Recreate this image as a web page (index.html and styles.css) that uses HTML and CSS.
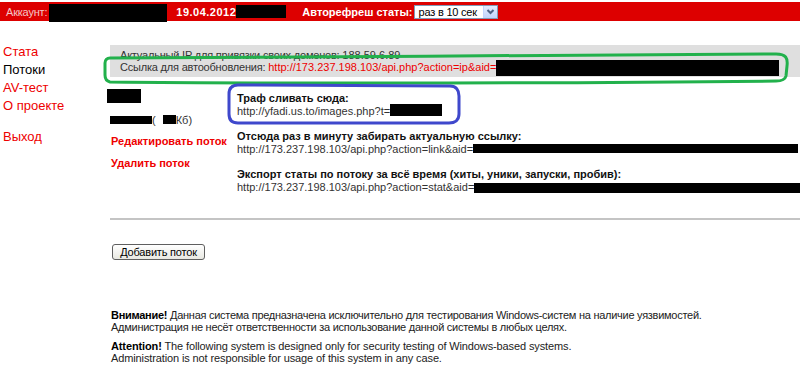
FILE: index.html
```html
<!DOCTYPE html>
<html>
<head>
    <meta charset="utf-8">
    <link rel="stylesheet" href="styles.css">
</head>
<body>

<!-- Top bar -->
<div class="topbar">
    <span class="acc-label">Аккаунт:</span>
    <span class="redact acc-id"></span>
    <b class="date">19.04.2012</b>
    <span class="redact date-tail"></span>
    <b class="refresh-label">Авторефреш статы:</b>
    <div class="fake-select">
        <span class="fake-select-text">раз в 10 сек</span>
        <span class="fake-select-arrow">
            <svg width="11" height="10" viewBox="0 0 11 10"><polyline points="2.5,3 5.5,6 8.5,3" fill="none" stroke="#4d6185" stroke-width="2"/></svg>
        </span>
    </div>
</div>

<div class="layout">
    <!-- Menu -->
    <ul class="nav">
        <li><a href="#">Стата</a></li>
        <li class="current">Потоки</li>
        <li><a href="#">AV-тест</a></li>
        <li><a href="#">О проекте</a></li>
        <li class="logout"><a href="#">Выход</a></li>
    </ul>

    <div class="content">
        <div class="infobox">
            <div class="info-line">Актуальный IP для привязки своих доменов: <span class="num">188.59.6.89</span></div>
            <div class="info-line">Ссылка для автообновления: <a href="#">http://173.237.198.103/api.php?action=ip&amp;aid=</a><span class="redact aid-ip"></span></div>
        </div>

        <!-- Stream -->
        <div class="stream">
            <div class="stream-side">
                <span class="redact thumb"></span>
                <div class="size"><span class="redact name"></span>(<span class="redact kb"></span>Кб)</div>
                <a href="#" class="action">Редактировать поток</a>
                <a href="#" class="action action-delete">Удалить поток</a>
            </div>
            <div class="stream-info">
                <div class="field">
                    <b>Траф сливать сюда:</b>
                    <div class="url">http://yfadi.us.to/images.php?t=<span class="redact url-t"></span></div>
                </div>
                <div class="field">
                    <b>Отсюда раз в минуту забирать актуальную ссылку:</b>
                    <div class="url">http://173.237.198.103/api.php?action=link&amp;aid=<span class="redact url-link"></span></div>
                </div>
                <div class="field">
                    <b>Экспорт статы по потоку за всё время (хиты, уники, запуски, пробив):</b>
                    <div class="url">http://173.237.198.103/api.php?action=stat&amp;aid=<span class="redact url-stat"></span></div>
                </div>
            </div>
        </div>

        <hr class="sep">

        <button class="add-btn">Добавить поток</button>

        <div class="warning">
            <p class="ru"><b>Внимание!</b> Данная система предназначена исключительно для тестирования Windows-систем на наличие уязвимостей.<br>
            Администрация не несёт ответственности за использование данной системы в любых целях.</p>
            <p class="en"><b>Attention!</b> The following system is designed only for security testing of Windows-based systems.<br>
            Administration is not responsible for usage of this system in any case.</p>
        </div>
    </div>
</div>

<!-- hand drawn marks over the screenshot -->
<svg class="marks" width="800" height="379" viewBox="0 0 800 379">
    <path d="M110,58 C300,57 600,55 776,54 C786,54 788,58 787,66 L786,76 C785,80 782,81 776,81 C600,83 300,84 110,82 C106,81 105,79 105,75 L105,63 C105,60 107,58 110,58 Z" fill="none" stroke="#22b14c" stroke-width="3"/>
    <path d="M238,85 L450,86 C456,86 459,90 459,96 L459,114 C459,120 455,123 449,123 L238,123 C232,123 229,120 229,114 L229,94 C229,88 232,85 238,85 Z" fill="none" stroke="#3f48cc" stroke-width="3"/>
</svg>

</body>
</html>
```

FILE: styles.css
```css
body {
    margin: 0;
    font-family: Tahoma, "Liberation Sans", Arial, sans-serif;
    font-size: 11px;
    color: #333;
    background: #fff;
}

a {
    text-decoration: none;
    color: #e00;
}

.redact {
    display: inline-block;
    background: #000;
}

/* top bar */
.topbar {
    display: flex;
    align-items: center;
    height: 19px;
    margin-top: 2px;
    padding-left: 6px;
    background: #dd0000;
    color: #fff;
}

.acc-label {
    color: #f3c6c6;
    letter-spacing: -0.2px;
}

.acc-id {
    align-self: flex-start;
    width: 118px;
    height: 18px;
    margin: 2px 0 0 2px;
}

.date {
    margin-left: 9px;
    letter-spacing: 0.5px;
}

.date-tail {
    align-self: flex-start;
    width: 50px;
    height: 13px;
    margin-top: 3px;
}

.refresh-label {
    margin-left: 16px;
}

.fake-select {
    display: flex;
    align-items: center;
    justify-content: space-between;
    width: 84px;
    height: 14px;
    margin-left: 2px;
    box-sizing: border-box;
    border: 1px solid #7f9db9;
    background: #fff;
    color: #000;
}

.fake-select-text {
    padding-left: 3px;
    letter-spacing: -0.2px;
}

.fake-select-arrow {
    display: flex;
    align-items: center;
    justify-content: center;
    width: 13px;
    height: 12px;
    background: linear-gradient(#e3ebfe, #c1d3fb);
    border-left: 1px solid #c3d3fd;
}

/* layout */
.layout {
    display: flex;
}

.nav {
    list-style: none;
    margin: 0;
    padding: 22px 0 0 3px;
    width: 110px;
    box-sizing: border-box;
    flex-shrink: 0;
    font-family: "Liberation Sans", Arial, sans-serif;
    font-size: 13px;
    line-height: 18px;
}

.nav .current {
    color: #000;
}

.nav .logout {
    margin-top: 13px;
}

.content {
    flex: 1;
    padding-top: 24px;
}

.infobox {
    background: #dfdfdf;
    padding: 4px 10px 4px;
    line-height: 12px;
    white-space: nowrap;
    letter-spacing: -0.2px;
}

.infobox a,
.infobox .num {
    letter-spacing: 0;
}

.aid-ip {
    width: 283px;
    height: 16px;
    margin-top: -4px;
    margin-bottom: -5px;
}

/* stream */
.stream {
    display: flex;
    margin-top: 12px;
    line-height: 13px;
}

.stream-side {
    width: 130px;
    margin-left: -3px;
    flex-shrink: 0;
}

.thumb {
    display: block;
    width: 34px;
    height: 14px;
}

.size {
    margin-top: 11px;
    padding-left: 3px;
}

.name {
    width: 42px;
    height: 8px;
}

.kb {
    width: 13px;
    height: 9px;
    margin-left: 7px;
}

.action {
    display: block;
    margin-top: 8px;
    padding-left: 4px;
    font-weight: bold;
    color: #e00;
}

.action-delete {
    margin-top: 9px;
}

.stream-info {
    flex: 1;
    padding-top: 3px;
    color: #111;
}

.field {
    margin-bottom: 12px;
}

.url {
    white-space: nowrap;
    color: #333;
}

.url-t {
    width: 52px;
    height: 12px;
    margin-top: -1px;
    margin-bottom: -1px;
}

.url-link {
    width: 325px;
    height: 9px;
}

.url-stat {
    width: 327px;
    height: 10px;
    margin-bottom: -2px;
}

.sep {
    margin: 12px 0 0;
    border: none;
    border-top: 2px solid #c4c4c4;
}

.add-btn {
    display: block;
    margin: 24px 0 0 2px;
    width: 93px;
    height: 16px;
    padding: 0;
    font-family: Tahoma, "Liberation Sans", Arial, sans-serif;
    font-size: 11px;
    letter-spacing: -0.2px;
    color: #000;
    border: 1px solid #5f5f5f;
    border-radius: 3px;
    background: linear-gradient(#ffffff, #e8e8e2);
}

.warning {
    margin-top: 49px;
    padding-left: 1px;
    line-height: 12px;
    color: #222;
}

.warning p {
    margin: 0 0 7px;
}

.warning .ru {
    letter-spacing: -0.27px;
}

.warning .en {
    letter-spacing: -0.12px;
}

.warning b {
    color: #000;
}

.marks {
    position: absolute;
    top: 0;
    left: 0;
    pointer-events: none;
}
```
